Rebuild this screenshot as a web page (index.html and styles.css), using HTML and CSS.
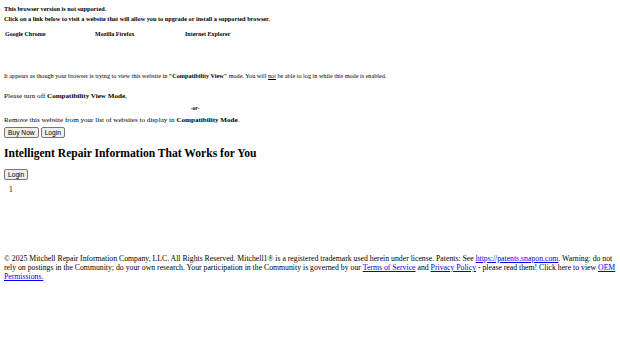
FILE: index.html
```html
<!DOCTYPE html>
<html>
<head>
<meta charset="utf-8">
<link rel="stylesheet" href="styles.css">
</head>
<body>
<div class="unsupported">
  <div class="line">This browser version is not supported.</div>
  <div class="line">Click on a link below to visit a website that will allow you to upgrade or install a supported browser.</div>
  <div class="browsers">
    <span class="browser">Google Chrome</span>
    <span class="browser">Mozilla Firefox</span>
    <span class="browser">Internet Explorer</span>
  </div>
</div>
<div class="compat">
  <p class="compat-intro">It appears as though your browser is trying to view this website in <b>"Compatibility View"</b> mode. You will <u>not</u> be able to log in while this mode is enabled.</p>
  <p class="compat-step">Please turn off <b>Compatibility View Mode</b>,</p>
  <div class="or">-or-</div>
  <p class="compat-step">Remove this website from your list of websites to display in <b>Compatibility Mode</b>.</p>
</div>
<div class="actions">
  <button class="btn">Buy Now</button>
  <button class="btn">Login</button>
</div>
<h1 class="title">Intelligent Repair Information That Works for You</h1>
<button class="btn">Login</button>
<ul class="pager"><li>1</li></ul>
<footer class="footer">© 2025 Mitchell Repair Information Company, LLC. All Rights Reserved. Mitchell1® is a registered trademark used herein under license. Patents: See <a href="#">https://patents.snapon.com</a>. Warning: do not rely on postings in the Community; do your own research. Your participation in the Community is governed by our <a href="#">Terms of Service</a> and <a href="#">Privacy Policy</a> - please read them! Click here to view <a href="#">OEM Permissions.</a></footer>
</body>
</html>
```

FILE: styles.css
```css
html { background: #ffffff; }
body {
  margin: 4px;
  font-family: "Liberation Serif", "Times New Roman", serif;
  font-size: 8px;
  color: #000;
}
.unsupported {
  font-size: 6.25px;
  font-weight: bold;
  line-height: 10px;
}
.browsers {
  display: flex;
  margin-top: 5px;
  padding-left: 1px;
  font-size: 6px;
}
.browser { width: 90px; }
.compat { margin-top: 32px; }
.compat p { margin: 0; }
.compat-intro { font-size: 6.2px; line-height: 10px; }
.compat-step { font-size: 7.1px; line-height: 10px; }
.compat-intro + .compat-step { margin-top: 10px; }
.or {
  font-size: 5.5px;
  font-weight: bold;
  text-align: center;
  width: 382px;
  line-height: 13px;
  margin-top: 1px;
}
.actions { margin-top: 2px; display: flex; gap: 2px; }
.btn {
  font-family: "Liberation Sans", Arial, sans-serif;
  font-size: 6.67px;
  padding: 1px 3px;
  margin: 0;
  border: 1px solid #767676;
  border-radius: 2px;
  background: #efefef;
  color: #000;
  line-height: 7px;
}
.title {
  font-size: 11.6px;
  font-weight: bold;
  margin: 9px 0 9px;
}
.pager {
  list-style: none;
  margin: 5px 0 0;
  padding: 0 0 0 5px;
  font-size: 7.5px;
  line-height: 9px;
}
.footer {
  margin-top: 60px;
  font-size: 7.75px;
  line-height: 9px;
}
.footer a { color: #0000ee; }
```
